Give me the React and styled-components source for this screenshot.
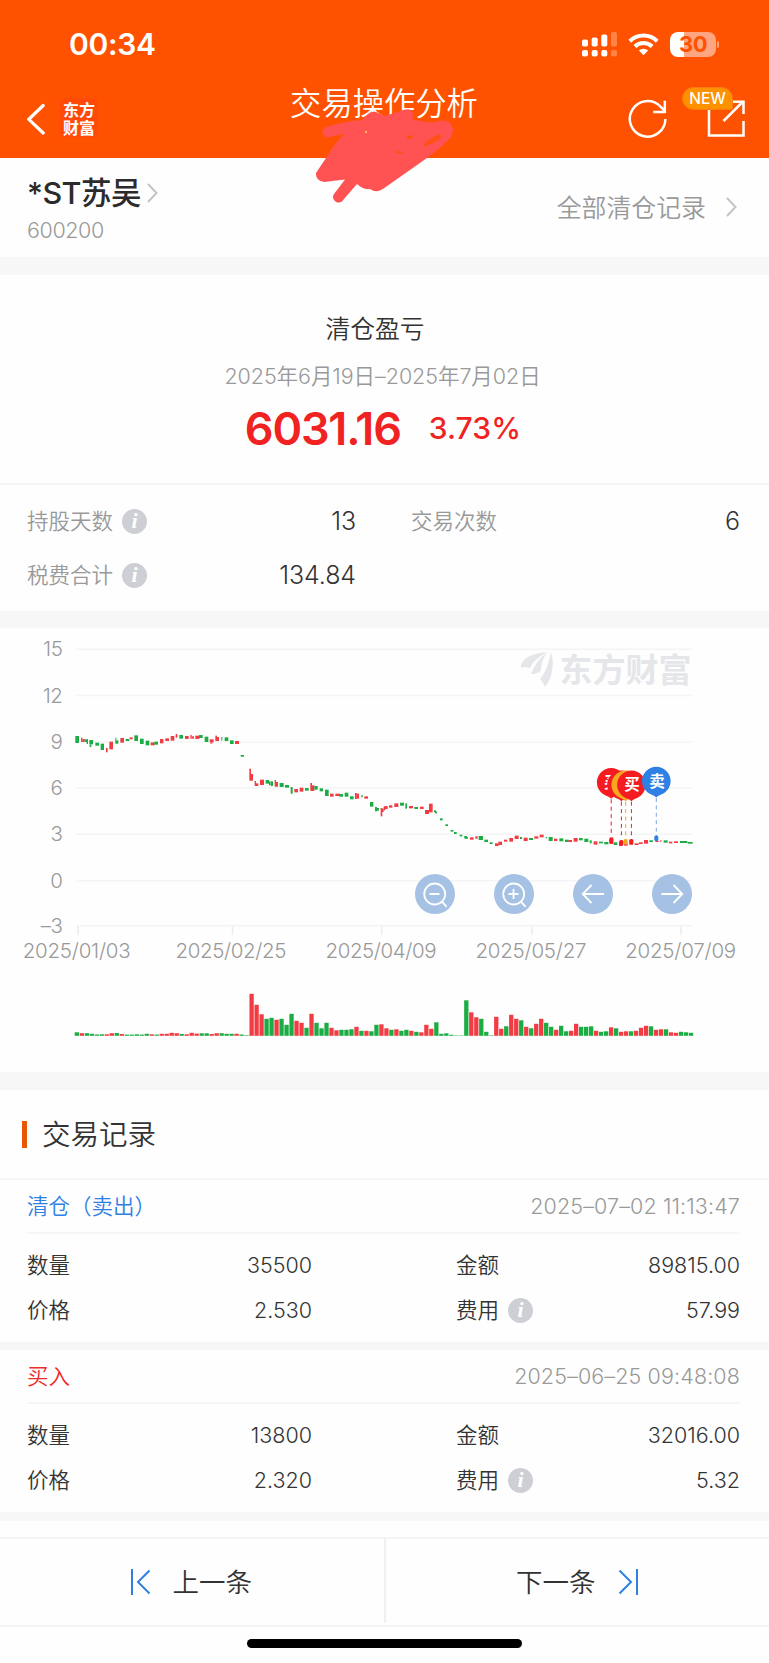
import React from "react";
import styled, { createGlobalStyle } from "styled-components";

const Global = createGlobalStyle`
  * { box-sizing: border-box; }
  html, body { margin: 0; padding: 0; background: #fff; }
  body { font-family: Inter, "Noto Sans CJK SC", sans-serif; font-weight: 350; color: #333; }
`;

const RED = "#f23c44";
const GREEN = "#1cac44";

const Page = styled.main`
  position: relative;
  width: 769px;
  height: 1663px;
  overflow: hidden;
  background: #fefefe;
  display: flex;
  flex-direction: column;
`;

const Header = styled.header`
  height: 158px;
  flex: none;
  background: #ff5200;
  color: #fff;
  display: flex;
  flex-direction: column;
`;
const StatusBar = styled.div`
  height: 88px;
  padding: 0 53px 0 69px;
  display: flex;
  align-items: center;
  justify-content: space-between;
`;
const Clock = styled.span`
  font-size: 30px;
  font-weight: 600;
  letter-spacing: -0.3px;
  line-height: 88px;
`;
const StatusIcons = styled.div`
  display: flex;
  align-items: center;
  gap: 11px;
`;
const Battery = styled.div`
  position: relative;
  width: 46px;
  height: 25px;
  border-radius: 8px;
  background: linear-gradient(90deg, #fff 0 14px, #ffa680 14px);
  color: #ff5200;
  font-size: 22px;
  font-weight: 700;
  letter-spacing: -0.4px;
  line-height: 25px;
  text-align: center;
  &::after {
    content: "";
    position: absolute;
    left: 47px;
    top: 9px;
    width: 2px;
    height: 7px;
    border-radius: 0 2px 2px 0;
    background: #ffa680;
  }
`;
const NavBar = styled.nav`
  height: 70px;
  padding: 0 24px 0 27px;
  display: flex;
  justify-content: space-between;
`;
const NavSide = styled.div`
  width: 220px;
  display: flex;
  align-items: flex-start;
  justify-content: ${(p) => (p.$end ? "flex-end" : "flex-start")};
  padding-top: 10px;
`;
const AppLogo = styled.div`
  width: 38px;
  height: 40px;
  margin-left: 14px;
  padding-top: 3px;
  border-radius: 6px;
  background: #ff4908;
  font-size: 16px;
  font-weight: 700;
  line-height: 18px;
  text-align: center;
`;
const NavTitle = styled.h1`
  margin: 1px 4px 0 0;
  font-size: 31.3px;
  font-weight: 350;
  line-height: 30px;
  white-space: nowrap;
`;
const ShareBox = styled.div`
  position: relative;
  width: 62px;
  height: 50px;
  margin-left: 15px;
  svg { display: block; margin-left: auto; }
`;
const NewBadge = styled.span`
  position: absolute;
  left: -1px;
  top: -11px;
  width: 51px;
  height: 23px;
  border: 1px solid #ff7a10;
  border-radius: 12px 12px 3px 12px;
  background: #fe9100;
  font-size: 15.5px;
  font-weight: 450;
  line-height: 22px;
  text-align: center;
`;

const Band = styled.div`
  flex: none;
  height: ${(p) => p.$h}px;
  background: #f7f7f7;
`;

const Stock = styled.section`
  height: 99px;
  flex: none;
  padding: 0 32px 0 27px;
  display: flex;
  justify-content: space-between;
`;
const StockName = styled.h2`
  margin: 14px 0 0;
  height: 42px;
  display: flex;
  align-items: center;
  gap: 6px;
  font-size: 30.5px;
  font-weight: 500;
  letter-spacing: -0.5px;
  line-height: 42px;
  color: #2b2b2b;
`;
const StockCode = styled.div`
  font-size: 21.5px;
  letter-spacing: -0.4px;
  line-height: 32px;
  color: #999;
`;
const AllRecords = styled.div`
  height: 97px;
  display: flex;
  align-items: center;
  gap: 20px;
  font-size: 24.9px;
  color: #999;
  span { margin-top: -2px; }
`;

const Summary = styled.section`
  height: 210px;
  flex: none;
  border-bottom: 2px solid #f4f4f4;
  display: flex;
  flex-direction: column;
  align-items: center;
`;
const SummaryTitle = styled.h3`
  margin: 34px 0 0 -19px;
  font-size: 24.8px;
  font-weight: 350;
  line-height: 40px;
`;
const SummaryRange = styled.div`
  margin: 10px 0 0 -4px;
  font-size: 21.5px;
  letter-spacing: -0.06px;
  line-height: 34px;
  color: #999;
  white-space: nowrap;
`;
const Profit = styled.div`
  margin: 7px 3px 0 0;
  display: flex;
  align-items: center;
  gap: 28px;
  height: 56px;
  color: #f02222;
`;
const ProfitValue = styled.span`
  font-size: 45px;
  font-weight: 600;
  letter-spacing: -1.2px;
`;
const ProfitRate = styled.span`
  font-size: 30px;
  font-weight: 500;
  letter-spacing: 0.1px;
`;

const Stats = styled.section`
  height: 126px;
  flex: none;
  padding: 9px 29px 0 27px;
  display: grid;
  grid-template-columns: 329px 329px;
  column-gap: 55px;
  grid-auto-rows: 54px;
`;
const Stat = styled.div`
  display: flex;
  align-items: center;
  justify-content: space-between;
`;
const StatLabel = styled.span`
  display: flex;
  align-items: center;
  gap: 9px;
  margin-top: -3px;
  font-size: 21.5px;
  color: #999;
`;
const StatValue = styled.span`
  font-size: 25px;
  letter-spacing: -0.1px;
`;
const Info = styled.i`
  width: 25px;
  height: 25px;
  margin-top: 3px;
  border-radius: 50%;
  background: #cdcfd4;
  color: #fff;
  font: italic 700 22px/24px "Liberation Serif", serif;
  text-align: center;
`;

const ChartPanel = styled.section`
  position: relative;
  height: 444px;
  flex: none;
  svg { display: block; }
`;
const ChartTools = styled.div`
  position: absolute;
  left: 415px;
  top: 246px;
  display: flex;
  gap: 39px;
`;
const ToolButton = styled.button`
  width: 40px;
  height: 40px;
  padding: 0;
  border: 0;
  border-radius: 50%;
  background: #a5c1e3;
`;

const SectionTitle = styled.h2`
  height: 90px;
  flex: none;
  margin: 0;
  padding: 0 22px;
  border-bottom: 2px solid #f6f6f6;
  display: flex;
  align-items: center;
  gap: 15px;
  font-size: 28.5px;
  font-weight: 350;
  line-height: 40px;
  span { margin-top: 2px; }
  &::before {
    content: "";
    width: 5px;
    height: 27px;
    background: #ea5504;
  }
`;
const Record = styled.article`
  height: 162px;
  flex: none;
  padding: 0 29px 0 27px;
`;
const RecordHead = styled.div`
  height: 54px;
  border-bottom: 2px solid #f6f6f6;
  display: flex;
  align-items: center;
  justify-content: space-between;
  font-size: 21.5px;
  color: ${(p) => p.$color};
`;
const RecordType = styled.span`
  margin-top: -3px;
`;
const RecordTime = styled.time`
  color: #999;
  letter-spacing: 0.12px;
`;
const RecordGrid = styled.div`
  padding-top: 8px;
  display: grid;
  grid-template-columns: 285px 284px;
  justify-content: space-between;
  grid-auto-rows: 45px;
`;
const Field = styled.div`
  display: flex;
  align-items: center;
  justify-content: space-between;
  font-size: 21.5px;
`;
const FieldLabel = styled.span`
  display: flex;
  align-items: center;
  gap: 9px;
  margin-top: -2px;
`;
const FieldValue = styled.span`
  letter-spacing: 0;
`;

const Footer = styled.footer`
  height: 90px;
  flex: none;
  margin-top: 16px;
  border-top: 2px solid #f3f3f3;
  border-bottom: 2px solid #f3f3f3;
  display: flex;
`;
const PageButton = styled.div`
  flex: 1;
  display: flex;
  align-items: center;
  justify-content: center;
  gap: 22px;
  padding-right: 1px;
  font-size: 26.5px;
  height: 84px;
  span { margin-top: -1px; }
  svg { margin-top: 2px; }
  & + & { border-left: 2px solid #f0f0f0; }
`;
const HomeBar = styled.div`
  width: 275px;
  height: 9px;
  margin: 12px auto 0;
  border-radius: 5px;
  background: #000;
`;
const Scribble = styled.svg`
  position: absolute;
  left: 310px;
  top: 105px;
`;

function Chevron({ size = 20, w = 11 }) {
  return (
    <svg width={w} height={size} viewBox="0 0 11 20" fill="none" stroke="#c4c4c4" strokeWidth="2">
      <path d="M1 1l8.5 9L1 19" />
    </svg>
  );
}

function Signal() {
  const bars = [[0, 39], [9.7, 37], [19.3, 34], [29, 31.5]];
  return (
    <svg width="35" height="25" viewBox="0 0 35 25" fill="#fff">
      {bars.map(([x, top], i) => (
        <g key={x} opacity={i === 3 ? 0.28 : 1}>
          <rect x={x} y={top - 31.5} width="6" height={46 - top} rx="1.8" />
          <rect x={x} y="18" width="6" height="6.6" rx="2" />
        </g>
      ))}
    </svg>
  );
}

function Wifi() {
  return (
    <svg width="31" height="23" viewBox="0 0 31 23" fill="none" stroke="#fff" strokeWidth="4">
      <path d="M1.8 8.2a19.6 19.6 0 0 1 27.4 0" />
      <path d="M6.9 13.5a12.4 12.4 0 0 1 17.2 0" />
      <path d="M15.5 22.3l-4.6-4.7a6.6 6.6 0 0 1 9.2 0z" fill="#fff" stroke="none" />
    </svg>
  );
}

const volumes = (
  "3.5G 2.6R 2.6G 2G 1.3G 1.5G 1.5R 2.6R 2.8G 1.8R 1.2G 1.2G 1.5G 1.2G 2G 1.5R 1.2G 2R 2R 3R 2.6R 1.8G 1.5R 3R 2.2R 2.5G 2.5G 1.8R 2.6R 2.6G 2G 2G 2R 1.3G .6G " +
  "42R 31R 21.5R 17G 18G 16R 17G 11G 22G 15R 13R 8G 22R 13G 7.5G 13G 8R 5.5R 6G 6G 6.5G 9R 5G 5R 4.5G 11G 11.5R 7.5R 6G 6.5R 5G 6G 5R 4G 3.5R 11R 7R 13.5G 2G 2.5G 1G .4G .4G " +
  "35.5G 23.5R 18.5R 17G 4G .5G 19R 7R 9.5G 21R 17R 15.5G 9R 7.5G 12R 17R 13G 9G 6R 10G 4.5G 5R 12R 9G 9G 9.5G 5R 4G 4.5G 8.5R 7.5G 4R 4.5R 4.5G 5R 8R 10R 9.5G 6R 6.5R 6.5G 3.5R 3R 4G 3.5G 3G"
).split(" ").map((v) => ({ h: parseFloat(v), up: v.endsWith("R") }));

// Candle pieces as x, y, width, height in thirds of a pixel; bodies and wicks are listed separately.
const winter = `G226,318,11,21 R243,323,4,13 R247,327,7,9 G254,328,10,8 G260,328,4,14 G268,330,11,13 G269,343,5,8 G286,338,11,9 G302,341,10,19 R318,354,5,13 R328,335,11,23
G346,323,3,18 G348,331,7,10 R361,324,11,14 G377,327,11,6 R389,322,9,6 G403,316,11,17 G420,326,11,16 G437,332,11,14 R452,337,12,9 G463,335,11,9 R480,327,10,13 R496,325,11,8
R512,318,11,14 R527,312,5,11 G538,315,11,11 R555,318,11,9 R571,315,4,11 R575,319,7,7 R586,317,12,10 G597,315,11,9 G614,320,11,16 R629,328,12,9 R631,337,6,4 R646,317,5,16
R650,321,7,12 G664,321,3,11 G674,322,11,11 G690,331,11,11 R705,333,12,9 G722,375,10,5 R748,416,5,36 R752,432,7,20 R764,453,4,15 R767,460,8,8 R780,449,12,16 G797,450,10,11
G807,454,5,12 G813,454,6,14 R824,450,4,20 R827,456,7,14 G839,459,12,12 G855,465,12,8 G872,471,6,20 R883,477,11,10 R899,473,11,12 G915,474,11,8 R931,459,5,24 R936,466,7,17
G943,468,10,11 G959,475,10,9 G975,479,11,19 R990,491,11,9 R1006,491,14,7 G1018,492,11,8 G1034,488,11,12 G1050,499,11,9 R1065,489,5,18 R1069,491,8,15 G1084,495,4,7
R1093,499,11,7 G1110,516,10,14 G1125,531,6,13 G1129,534,8,8 R1142,534,5,25 R1146,536,5,10 R1151,529,5,12`;
const spring = `R0,528,8,9 R12,526,10,7 R28,520,12,11 G45,518,12,9 G61,520,5,16 R72,528,12,7 G88,531,11,6 R105,530,11,7 R120,540,12,12 R132,521,11,26 G147,541,6,6 G150,545,6,5
G165,565,8,6 G181,583,8,5 G197,600,8,5 G207,606,8,6 G224,614,8,5 G238,618,8,7 G239,621,10,5 R255,622,11,7 R271,619,7,7 G281,618,13,12 G298,629,11,7 G314,637,9,5 R330,640,11,8
R340,635,11,10 R357,629,10,6 R373,624,11,11 R389,617,12,10 G405,621,6,6 R416,623,12,10 G432,624,12,6 R448,619,12,7 R464,614,12,8 G482,621,4,4 G491,621,12,12 R507,626,10,7
G523,625,12,9 G540,629,11,7 R550,630,11,6 R566,624,12,11 G582,624,11,7 G598,626,12,10 G614,631,6,9 R626,634,11,10 G642,635,12,5 G658,636,12,7 R674,622,11,20 G686,637,11,8
R702,634,11,14 R717,639,11,8 R733,630,11,14 R749,640,12,5 R762,637,11,5 R777,630,12,11 G793,631,11,5 R811,632,10,4 R825,631,5,4 G836,631,12,7 R852,635,10,5 R867,634,12,5
G885,633,22,6 G908,636,15,5`;
const parse = (s) => s.split(/\s+/).map((t) => [t[0], ...t.slice(1).split(",").map(Number)]);

function Candles({ data, shift }) {
  return (
    <g transform={`translate(${shift} 2) scale(${1 / 3})`}>
      {parse(data).map(([c, x, y, w, h], i) => (
        <rect key={i} x={x} y={y} width={w} height={h} fill={c === "R" ? RED : GREEN} />
      ))}
    </g>
  );
}

function Pin({ x, y, color, line, label, dot }) {
  return (
    <g>
      <path d={`M${x} ${y + 17}V208`} stroke={line || color} strokeWidth="1" strokeDasharray="4 3.4" />
      <rect x={x - 2} y={dot - 3} width="4" height="5.5" rx="1.5" fill={color} />
      <path
        d={`M${x} ${y + 16.5}c-2.2-2.3-5.2-2.5-8.6-5a14.3 14.3 0 1 1 17.2 0c-3.4 2.5-6.4 2.7-8.6 5z`}
        fill={color}
      />
      {label && (
        <text x={x + 0.6} y={y + 5.6} fontSize="15.5" fontWeight="700" textAnchor="middle" fill="#fff">
          {label}
        </text>
      )}
    </g>
  );
}

const levels = [["15", 21.3], ["12", 67.5], ["9", 114], ["6", 159.7], ["3", 206.2], ["0", 252.7], ["–3", 297.7]];
const dates = [["2025/01/03", 76.7, 78], ["2025/02/25", 231, 232.5], ["2025/04/09", 381, 381.7], ["2025/05/27", 531, 532], ["2025/07/09", 680.7, 681]];

function PriceChart() {
  return (
    <svg width="769" height="444" viewBox="0 0 769 444" fontFamily='Inter, "Noto Sans CJK SC", sans-serif'>
      {levels.map(([label, y]) => (
        <g key={label}>
          <path d={`M77 ${y}H691`} stroke="#f3f4f5" strokeWidth="1.6" />
          <text x="62.5" y={y + 7} fontSize="20.5" letterSpacing="-.4" fill="#999" textAnchor="end">{label}</text>
        </g>
      ))}
      {dates.map(([label, x, tick]) => (
        <g key={label}>
          <path d={`M${tick} 298v9`} stroke="#eceded" strokeWidth="1.5" />
          <text x={x} y="330" fontSize="20.5" fill="#999" textAnchor="middle" textLength={label === "2025/01/03" ? 108 : 111}>
            {label}
          </text>
        </g>
      ))}
      <g fill="#e5e6ea">
        <path d="M521 37C524 28 536 25 547 24C540 28 533 33 530 40Q525 38 521 40Z" />
        <path d="M549 23C540 29 534 38 531 46C537 46 540 44 541 42C541 35 544 28 549 23Z" />
        <path d="M551 24C555 37 552 50 545 59Q543 54 540 51C547 43 549 33 551 24Z" />
        <text x="559.5" y="53.5" fontSize="33" fontWeight="700" textLength="132">东方财富</text>
      </g>
      <Candles data={winter} shift={0} />
      <Candles data={spring} shift={385} />
      <Pin x={611.2} y={154.3} color="#f41c20" label="买" dot={213} />
      <Pin x={621.4} y={156.7} color="#f41c20" dot={215} />
      <Pin x={625.7} y={156.7} color="#f9a61f" dot={214} />
      <Pin x={631.4} y={156.7} color="#f41c20" label="买" dot={214} />
      <Pin x={656.3} y={153} color="#2f80e5" line="#7fa7e6" label="卖" dot={210.5} />
      {volumes.map((v, i) => (
        <rect key={i} x={74.7 + i * 4.993} y={407.8 - v.h} width="4.3" height={v.h} fill={v.up ? RED : GREEN} />
      ))}
    </svg>
  );
}

const toolPaths = {
  out: "M14.5 20h10M27.2 27.8l4.4 5",
  in: "M14.5 20h10M19.5 15v10M27.2 27.8l4.4 5",
  prev: "M31 20H10M18.5 11L9.7 20l8.8 9",
  next: "M9.5 20h21M21.5 11l8.8 9-8.8 9",
};

function Tool({ kind }) {
  return (
    <ToolButton aria-label={kind}>
      <svg width="40" height="40" viewBox="0 0 40 40" fill="none" stroke="#fff" strokeWidth="1.8">
        {(kind === "in" || kind === "out") && <circle cx="19.7" cy="20" r="10.5" />}
        <path d={toolPaths[kind]} />
      </svg>
    </ToolButton>
  );
}

function RecordCard({ type, color, time, qty, amount, price, fee }) {
  return (
    <Record>
      <RecordHead $color={color}>
        <RecordType>{type}</RecordType>
        <RecordTime>{time}</RecordTime>
      </RecordHead>
      <RecordGrid>
        <Field><FieldLabel>数量</FieldLabel><FieldValue>{qty}</FieldValue></Field>
        <Field><FieldLabel>金额</FieldLabel><FieldValue>{amount}</FieldValue></Field>
        <Field><FieldLabel>价格</FieldLabel><FieldValue>{price}</FieldValue></Field>
        <Field><FieldLabel>费用<Info>i</Info></FieldLabel><FieldValue>{fee}</FieldValue></Field>
      </RecordGrid>
    </Record>
  );
}

export default function App() {
  return (
    <Page>
      <Global />
      <Header>
        <StatusBar>
          <Clock>00:34</Clock>
          <StatusIcons>
            <Signal />
            <Wifi />
            <Battery>30</Battery>
          </StatusIcons>
        </StatusBar>
        <NavBar>
          <NavSide>
            <svg width="19" height="42" viewBox="0 0 19 42" fill="none" stroke="#fff" strokeWidth="3.2" strokeLinecap="round">
              <path d="M16.2 7.5L1.8 21.3 16.2 35" />
            </svg>
            <AppLogo>东方<br />财富</AppLogo>
          </NavSide>
          <NavTitle>交易操作分析</NavTitle>
          <NavSide $end>
            <svg width="40" height="42" viewBox="0 0 40 42" fill="none" stroke="#fff" strokeWidth="2.5">
              <path d="M37.4 21A17.8 17.8 0 1 1 32.3 8.4L36.3 12.5M36.8 2.7V14H25.3" />
            </svg>
            <ShareBox>
              <svg width="38" height="42" viewBox="0 0 38 42" fill="none" stroke="#fff" strokeWidth="2.5">
                <path d="M2 10V37.5H36.5V23M16.5 23L35.5 4M26 3.7H36.5V16" />
              </svg>
              <NewBadge>NEW</NewBadge>
            </ShareBox>
          </NavSide>
        </NavBar>
      </Header>

      <Stock>
        <div>
          <StockName>*ST苏吴<Chevron /></StockName>
          <StockCode>600200</StockCode>
        </div>
        <AllRecords><span>全部清仓记录</span><Chevron /></AllRecords>
      </Stock>
      <Band $h={18} />

      <Summary>
        <SummaryTitle>清仓盈亏</SummaryTitle>
        <SummaryRange>2025年6月19日–2025年7月02日</SummaryRange>
        <Profit>
          <ProfitValue>6031.16</ProfitValue>
          <ProfitRate>3.73%</ProfitRate>
        </Profit>
      </Summary>
      <Stats>
        <Stat><StatLabel>持股天数<Info>i</Info></StatLabel><StatValue>13</StatValue></Stat>
        <Stat><StatLabel>交易次数</StatLabel><StatValue>6</StatValue></Stat>
        <Stat><StatLabel>税费合计<Info>i</Info></StatLabel><StatValue>134.84</StatValue></Stat>
      </Stats>
      <Band $h={17} />

      <ChartPanel>
        <PriceChart />
        <ChartTools>
          <Tool kind="out" />
          <Tool kind="in" />
          <Tool kind="prev" />
          <Tool kind="next" />
        </ChartTools>
      </ChartPanel>
      <Band $h={18} />

      <SectionTitle><span>交易记录</span></SectionTitle>
      <RecordCard type="清仓（卖出）" color="#2f80e5" time="2025–07–02 11:13:47" qty="35500" amount="89815.00" price="2.530" fee="57.99" />
      <Band $h={8} />
      <RecordCard type="买入" color="#ee2b2b" time="2025–06–25 09:48:08" qty="13800" amount="32016.00" price="2.320" fee="5.32" />
      <Band $h={9} />

      <Footer>
        <PageButton>
          <svg width="20" height="26" viewBox="0 0 20 26" fill="none" stroke="#2f80e5" strokeWidth="2">
            <path d="M1 0v26M18.5 1.5L7 13l11.5 11.5" />
          </svg>
          <span>上一条</span>
        </PageButton>
        <PageButton>
          <span>下一条</span>
          <svg width="20" height="26" viewBox="0 0 20 26" fill="none" stroke="#2f80e5" strokeWidth="2">
            <path d="M19 0v26M1.5 1.5L13 13 1.5 24.5" />
          </svg>
        </PageButton>
      </Footer>
      <HomeBar />

      <Scribble width="150" height="105" viewBox="310 105 150 105">
        <path
          fill="#ff5252"
          d="M326 127Q346 121 362 120Q370 110 376 112L385 116L403 110Q414 107 413 116L412 119Q424 123 435 122Q443 119 449 122Q456 128 451 137Q445 145 427 158L385 187.5Q377 194 370 189Q363 190 357 184L344 199Q341 204 336 202Q331 198 334 194L345 179.5L324 182Q315 180 316 173Q322 164 326 158Q334 144 344 134L327 137.5Q321 135 323 129Z"
        />
        <g fill="#ff5200">
          <path d="M406 138Q410 134 413 136Q411 140 406 138M395 152Q399 150 403 153Q398 154 395 152" />
          <path d="M423 146Q427 139 440 134Q443 136 438 140Q429 146 423 146Z" opacity=".75" />
          <circle cx="366" cy="132" r="1.2" fill="#ffb060" />
        </g>
      </Scribble>
    </Page>
  );
}
